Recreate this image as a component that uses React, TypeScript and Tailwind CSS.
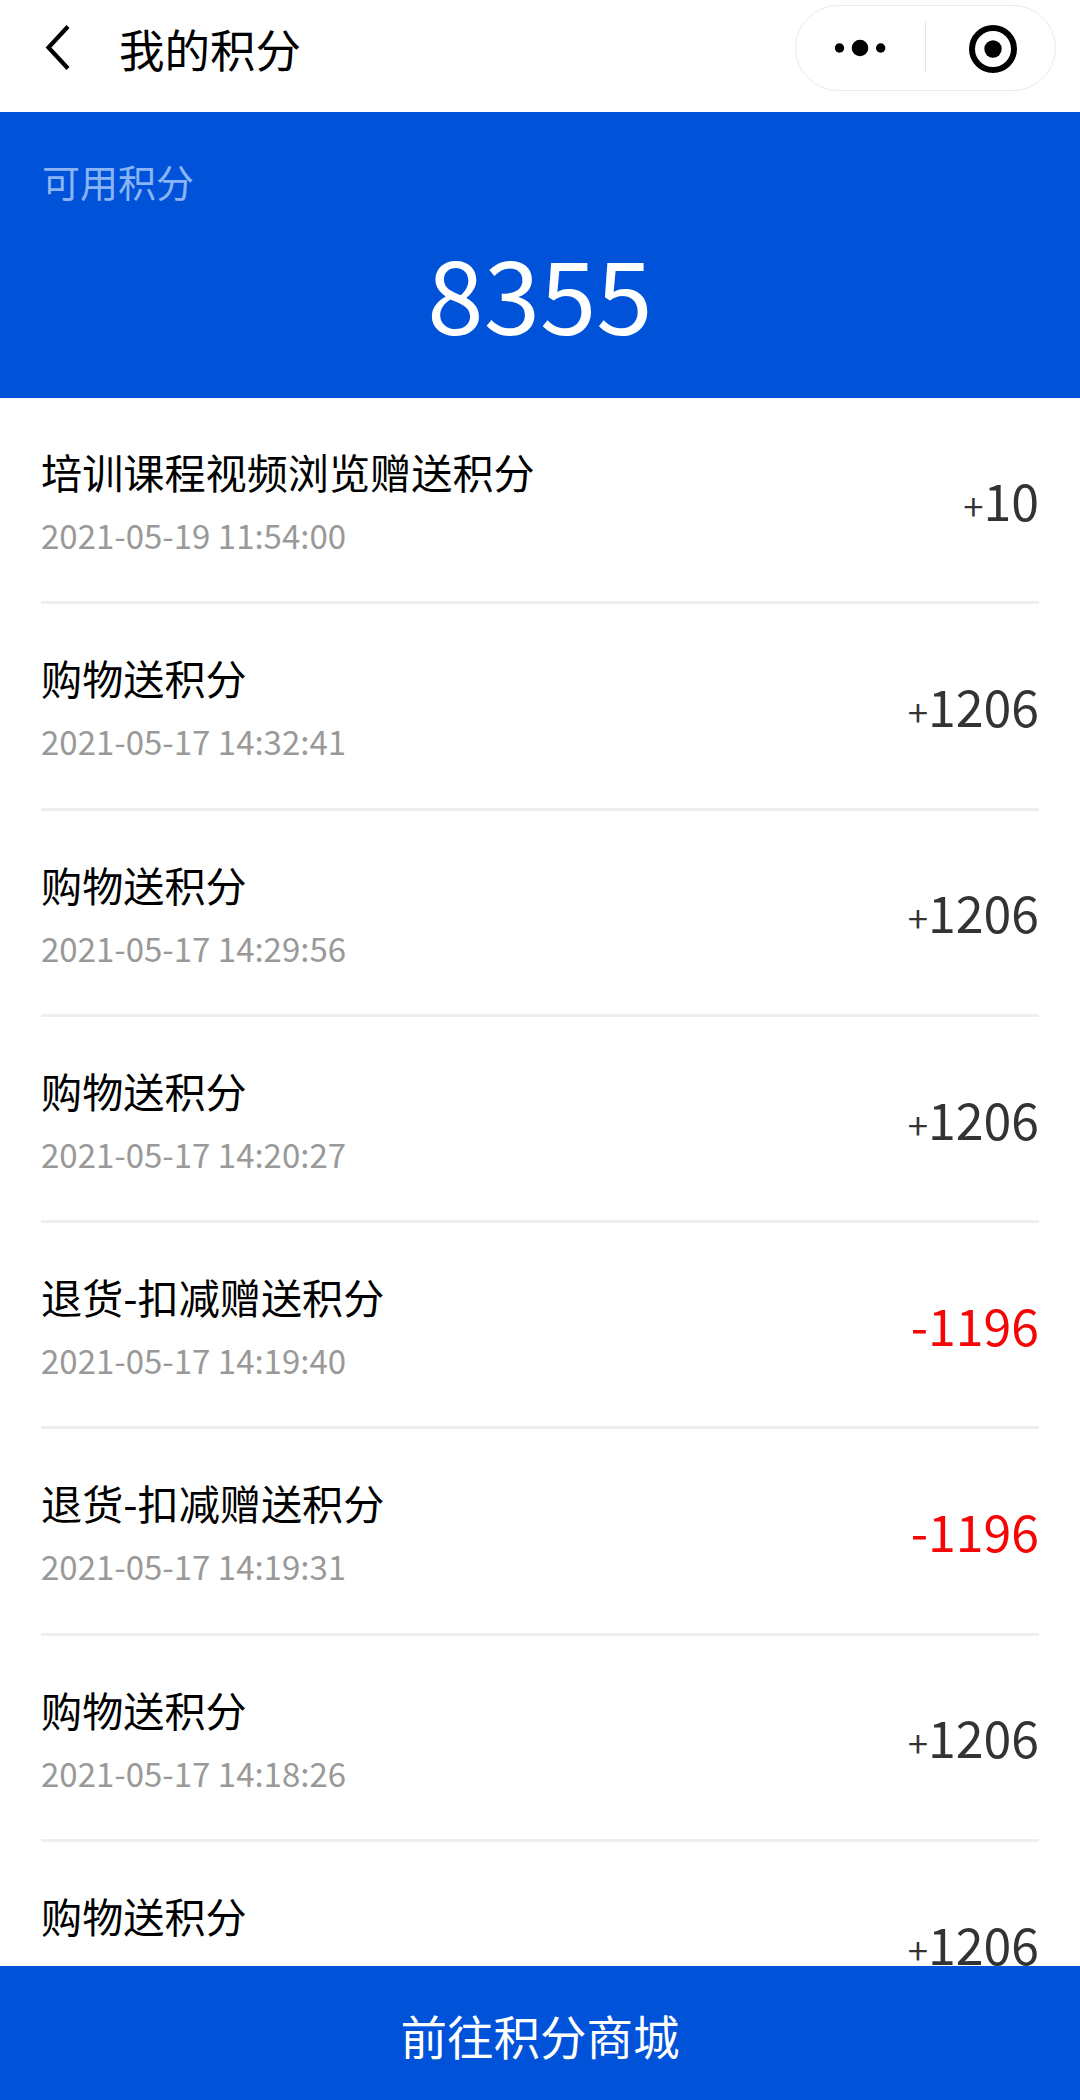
const font = "font-['Noto_Sans_CJK_SC',sans-serif]";

const rows = [
  { title: '培训课程视频浏览赠送积分', time: '2021-05-19 11:54:00', value: 10 },
  { title: '购物送积分', time: '2021-05-17 14:32:41', value: 1206 },
  { title: '购物送积分', time: '2021-05-17 14:29:56', value: 1206 },
  { title: '购物送积分', time: '2021-05-17 14:20:27', value: 1206 },
  { title: '退货-扣减赠送积分', time: '2021-05-17 14:19:40', value: -1196 },
  { title: '退货-扣减赠送积分', time: '2021-05-17 14:19:31', value: -1196 },
  { title: '购物送积分', time: '2021-05-17 14:18:26', value: 1206 },
  { title: '购物送积分', time: '', value: 1206 },
];

function Amount({ value }: { value: number }) {
  if (value < 0) {
    return <span className="self-center pb-[2px] text-[50px] leading-[60px] text-[#f50505]">{value}</span>;
  }
  return (
    <span className="self-center pb-[2px] text-[50px] leading-[60px] text-[#333]">
      <span className="text-[37px] font-[350] leading-none">+</span>
      {value}
    </span>
  );
}

export default function App() {
  return (
    <div className={`${font} flex h-[2100px] w-[1080px] flex-col overflow-hidden bg-white text-black`}>
      <header className="flex h-[112px] shrink-0 items-start justify-between pl-[42px] pr-[24px]">
        <div className="flex h-[96px] items-center">
          <svg width="30" height="48" viewBox="0 0 30 48" fill="none">
            <path d="M26 2.500L6.500 23.500L26 44.500" stroke="#000" strokeWidth="4.200" />
          </svg>
          <h1 className="ml-[47px] text-[45.500px] leading-[60px]">我的积分</h1>
        </div>
        <div className="mt-[5px] flex h-[86px] w-[261px] items-center rounded-full border border-[#ebebeb]">
          <svg width="259" height="84" viewBox="0 0 259 84">
            <circle cx="43.500" cy="42" r="4.700" />
            <circle cx="64" cy="42" r="8.300" />
            <circle cx="84.700" cy="42" r="4.700" />
            <path d="M129.500 16V67" stroke="#e5e5e5" strokeWidth="1" />
            <circle cx="197" cy="43" r="21" fill="none" stroke="#000" strokeWidth="6" />
            <circle cx="197" cy="43" r="8.700" />
          </svg>
        </div>
      </header>
      <section className="h-[286px] shrink-0 bg-[#0052d9] px-[42px] pt-[39px] text-white">
        <p className="text-[38px] leading-[60px] text-[#8ab4f5]">可用积分</p>
        <p className="mt-[20px] text-center text-[101.500px] leading-[120px]">8355</p>
      </section>
      <ul className="min-h-0 flex-1 overflow-hidden px-[41px]">
        {rows.map((r, i) => (
          <li key={i} className="flex h-[206.300px] justify-between border-b-[3px] border-[#eee]">
            <div className="pt-[43px]">
              <p className="text-[41.150px] leading-[60px]">{r.title}</p>
              {r.time && <p className="mt-[4px] text-[33px] leading-[60px] text-[#999]">{r.time}</p>}
            </div>
            <Amount value={r.value} />
          </li>
        ))}
      </ul>
      <button className="h-[134px] shrink-0 bg-[#0052d9] pt-[3px] text-[46.500px] text-white">前往积分商城</button>
    </div>
  );
}
